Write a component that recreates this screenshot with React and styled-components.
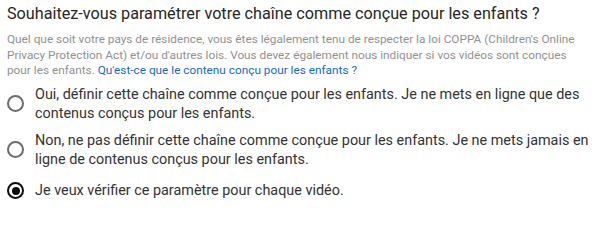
import React, { useState } from 'react';
import styled, { createGlobalStyle } from 'styled-components';

const GlobalStyle = createGlobalStyle`
  html, body {
    margin: 0;
    padding: 0;
    background: #ffffff;
  }
  body {
    font-family: Roboto, "Noto Sans", Arial, sans-serif;
  }
`;

const Section = styled.section`
  width: 600px;
  height: 218px;
  box-sizing: border-box;
  padding: 4px 10px 0 7px;
  overflow: hidden;
`;

const Title = styled.h2`
  margin: 0;
  font-size: 16.2px;
  font-weight: 400;
  line-height: 20px;
  color: #262626;
`;

const Description = styled.p`
  margin: 8px 0 0;
  max-width: 573px;
  font-size: 11.8px;
  line-height: 15.5px;
  color: #919191;
`;

const Link = styled.a`
  color: #1a67c8;
  text-decoration: none;
  cursor: pointer;
`;

const Options = styled.div`
  display: flex;
  flex-direction: column;
  gap: 8px;
  margin-top: 6px;
`;

const Option = styled.label`
  display: flex;
  align-items: center;
  gap: 11px;
  min-height: 28px;
  cursor: pointer;
`;

const Radio = styled.span`
  flex: 0 0 auto;
  box-sizing: border-box;
  width: 17px;
  height: 17px;
  border-radius: 50%;
  border: 2px solid ${(p) => (p.checked ? '#0d0d0d' : '#6b6b6b')};
  display: flex;
  align-items: center;
  justify-content: center;

  &::after {
    content: '';
    width: 8px;
    height: 8px;
    border-radius: 50%;
    background: #0d0d0d;
    display: ${(p) => (p.checked ? 'block' : 'none')};
  }
`;

const OptionText = styled.span`
  font-size: 14.4px;
  line-height: 19px;
  color: #333333;
`;

const options = [
  {
    id: 'yes',
    label:
      'Oui, définir cette chaîne comme conçue pour les enfants. Je ne mets en ligne que des contenus conçus pour les enfants.',
  },
  {
    id: 'no',
    label:
      'Non, ne pas définir cette chaîne comme conçue pour les enfants. Je ne mets jamais en ligne de contenus conçus pour les enfants.',
  },
  {
    id: 'each',
    label: 'Je veux vérifier ce paramètre pour chaque vidéo.',
  },
];

export default function App() {
  const [selected, setSelected] = useState('each');

  return (
    <>
      <GlobalStyle />
      <Section>
        <Title>Souhaitez-vous paramétrer votre chaîne comme conçue pour les enfants ?</Title>
        <Description>
          Quel que soit votre pays de résidence, vous êtes légalement tenu de respecter la loi
          COPPA (Children's Online Privacy Protection Act) et/ou d'autres lois. Vous devez
          également nous indiquer si vos vidéos sont conçues pour les enfants.{' '}
          <Link>Qu'est-ce que le contenu conçu pour les enfants ?</Link>
        </Description>
        <Options>
          {options.map((o) => (
            <Option key={o.id} onClick={() => setSelected(o.id)}>
              <Radio checked={selected === o.id} />
              <OptionText>{o.label}</OptionText>
            </Option>
          ))}
        </Options>
      </Section>
    </>
  );
}
